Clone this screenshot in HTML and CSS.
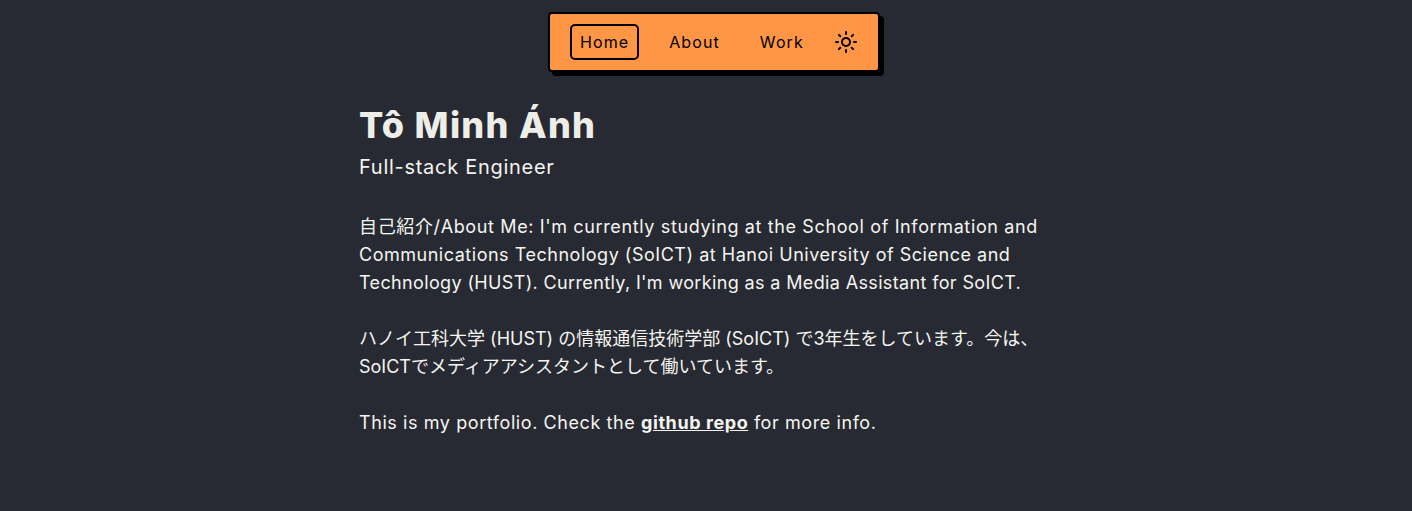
FILE: index.html
```html
<!DOCTYPE html>
<html lang="en">
<head>
    <meta charset="UTF-8">
    <meta name="viewport" content="width=device-width, initial-scale=1.0">
    <title>Tô Minh Ánh</title>
    <link rel="stylesheet" href="styles.css">
</head>
<body>
    <nav class="navbar">
        <a class="nav-link active" href="#">Home</a>
        <a class="nav-link" href="#">About</a>
        <a class="nav-link" href="#">Work</a>
        <button class="theme-toggle" aria-label="Toggle theme">
            <svg width="24" height="24" viewBox="0 0 24 24" fill="none" stroke="#000" stroke-width="2" stroke-linecap="round">
                <circle cx="12" cy="12" r="4"/>
                <path d="M12 2v2M12 20v2M4.9 4.9l1.4 1.4M17.7 17.7l1.4 1.4M2 12h2M20 12h2M4.9 19.1l1.4-1.4M17.7 6.3l1.4-1.4"/>
            </svg>
        </button>
    </nav>
    <main class="content">
        <h1>Tô Minh Ánh</h1>
        <h2>Full-stack Engineer</h2>
        <p><span class="line-wide">自己紹介/About Me: I'm currently studying at the School of Information and</span><br>Communications Technology (SoICT) at Hanoi University of Science and<br><span class="line-tight">Technology (HUST). Currently, I'm working as a Media Assistant for SoICT.</span></p>
        <p class="ja-text">ハノイ工科大学 (HUST) の情報通信技術学部 (SoICT) で3年生をしています。今は、<br>SoICTでメディアアシスタントとして働いています。</p>
        <p class="line-last">This is my portfolio. Check the <a class="repo-link" href="#">github repo</a> for more info.</p>
    </main>
</body>
</html>
```

FILE: styles.css
```css
body {
    margin: 0;
    background-color: #282a33;
    color: #f5f5ef;
    font-family: Inter, "Noto Sans CJK JP", sans-serif;
}
.navbar {
    display: flex;
    align-items: center;
    gap: 20px;
    box-sizing: border-box;
    width: 332px;
    height: 60px;
    margin: 12px 0 0 calc(50% - 158px);
    padding: 0 20px;
    background-color: #ff9645;
    border: 2px solid #000;
    border-radius: 4px;
    box-shadow: 4px 4px 0 #000;
}
.nav-link {
    height: 32px;
    padding: 0 8px;
    line-height: 32px;
    font-size: 16px;
    letter-spacing: 1.1px;
    color: #000;
    text-decoration: none;
    border: 2px solid transparent;
    border-radius: 5px;
}
.nav-link.active {
    border-color: #000;
}
.theme-toggle {
    display: flex;
    padding: 0;
    background: none;
    border: none;
}
.content {
    width: 694px;
    margin: 30px auto 0;
}
h1 {
    margin: 0 0 5px;
    height: 46px;
    line-height: 46px;
    font-size: 36px;
    font-weight: 800;
    letter-spacing: 1.3px;
    color: #eeeee8;
}
h2 {
    margin: 0 0 32px;
    height: 28px;
    line-height: 28px;
    font-size: 20px;
    font-weight: 400;
    letter-spacing: 0.72px;
}
p {
    margin: 0 0 28px;
    font-size: 18px;
    line-height: 28px;
    letter-spacing: 0.52px;
}
.ja-text {
    letter-spacing: 0;
}
.line-wide {
    letter-spacing: 0.63px;
}
.line-tight {
    letter-spacing: 0.36px;
}
.line-last {
    letter-spacing: 0.58px;
}
.repo-link {
    color: inherit;
    font-weight: 700;
}
```
